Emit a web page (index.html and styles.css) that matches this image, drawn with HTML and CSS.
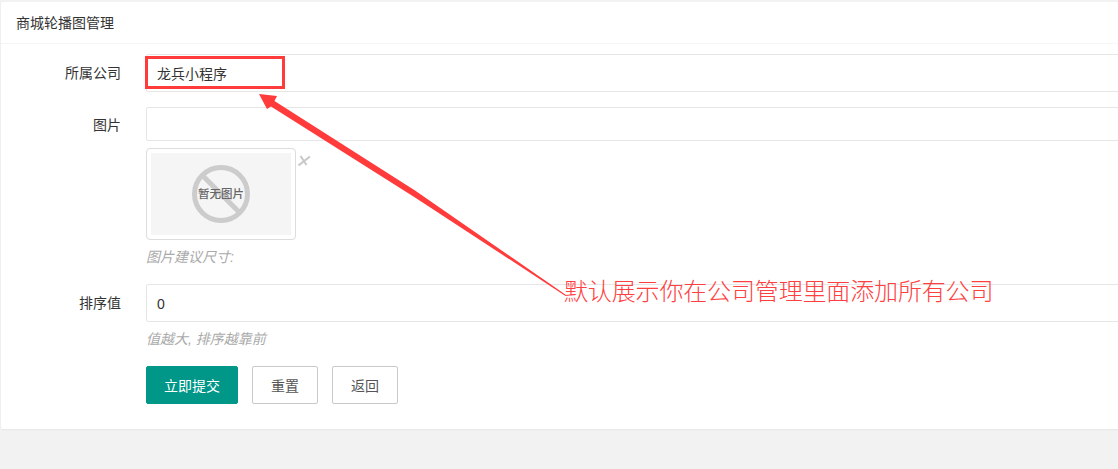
FILE: index.html
```html
<!DOCTYPE html>
<html lang="zh">
<head>
  <meta charset="UTF-8" />
  <title>商城轮播图管理</title>
  <link rel="stylesheet" href="styles.css">
</head>
<body>
  <div class="card">
    <div class="card-header">商城轮播图管理</div>
    <form class="form">
      <div class="row row-company">
        <label class="row-label">所属公司</label>
        <div class="row-field">
          <div class="input input-tall">龙兵小程序</div>
          <div class="mark-box"></div>
        </div>
      </div>
      <div class="row row-image">
        <label class="row-label">图片</label>
        <div class="row-field">
          <div class="input input-short"></div>
          <div class="thumb-line">
            <div class="thumb">
              <div class="thumb-inner">
                <svg class="no-image" width="60" height="60" viewBox="0 0 60 60">
                  <circle cx="30" cy="30" r="26.5" fill="none" stroke="#ccc" stroke-width="5"/>
                  <line x1="11" y1="11" x2="49" y2="49" stroke="#ccc" stroke-width="5"/>
                </svg>
                <span class="no-image-text">暂无图片</span>
              </div>
            </div>
            <svg class="thumb-close" width="14" height="12" viewBox="0 0 14 12">
              <path d="M0.5 10.5 L12 1.5 M2.5 1 L8.5 10" fill="none" stroke="#c8c8c8" stroke-width="2"/>
            </svg>
          </div>
          <p class="hint hint-image">图片建议尺寸:</p>
        </div>
      </div>
      <div class="row row-sort">
        <label class="row-label">排序值</label>
        <div class="row-field">
          <div class="input input-tall">0</div>
          <p class="hint hint-sort">值越大, 排序越靠前</p>
        </div>
      </div>
      <div class="row row-actions">
        <div class="row-label"></div>
        <div class="actions">
          <button type="button" class="btn btn-primary">立即提交</button>
          <button type="button" class="btn">重置</button>
          <button type="button" class="btn">返回</button>
        </div>
      </div>
    </form>
  </div>

  <svg class="arrow" width="1118" height="469" viewBox="0 0 1118 469">
    <polygon points="259,94 277,96 274.5,101 415,190.5 566,295 565.5,296 415,197.5 271,106.5 267,109" fill="#ff3b3b"/>
  </svg>
  <div class="note">默认展示你在公司管理里面添加所有公司</div>
</body>
</html>
```

FILE: styles.css
```css
* { box-sizing: border-box; margin: 0; padding: 0; }
html, body { height: 100%; }
body {
  position: relative;
  background: #f2f2f2;
  font-family: "Liberation Sans", "Noto Sans CJK SC", sans-serif;
  font-size: 14px;
  color: #333;
  overflow: hidden;
  padding: 2px 0 0 1px;
}
.card {
  width: calc(100% + 20px);
  height: 427px;
  background: #fff;
  border-radius: 2px;
  box-shadow: 0 1px 2px rgba(0,0,0,0.05);
}
.card-header {
  height: 42px;
  line-height: 42px;
  padding-left: 15px;
  border-bottom: 1px solid #f6f6f6;
}
.form { padding-top: 10px; }
.row { display: flex; }
.row-label {
  width: 120px;
  flex: none;
  text-align: right;
  line-height: 38px;
}
.row-field {
  position: relative;
  flex: 1;
  margin-left: 25px;
}
.input {
  border: 1px solid #e6e6e6;
  border-radius: 2px;
  padding-left: 10px;
  background: #fff;
}
.input-tall { height: 38px; line-height: 38px; }
.input-short { height: 34px; }
.row-image { margin-top: 15px; }
.row-image .row-label { line-height: 36px; }
.thumb-line { display: flex; margin-top: 7px; }
.thumb {
  width: 150px;
  height: 92px;
  padding: 4px;
  border: 1px solid #ddd;
  border-radius: 4px;
}
.thumb-inner {
  position: relative;
  display: flex;
  align-items: center;
  justify-content: center;
  height: 100%;
  background: #f5f5f5;
}
.no-image-text {
  position: absolute;
  font-size: 11.5px;
  line-height: 16px;
  font-weight: 500;
  color: #666;
}
.thumb-close { margin: 7px 0 0 2px; }
.hint {
  font-style: italic;
  color: #aaa;
  line-height: 20px;
}
.hint-image { margin-top: 7px; }
.row-sort { margin-top: 17px; }
.hint-sort { margin-top: 7px; }
.row-actions { margin-top: 17px; }
.actions { display: flex; gap: 14px; margin-left: 25px; }
.btn {
  width: 66px;
  height: 38px;
  background: #fff;
  border: 1px solid #c9c9c9;
  border-radius: 2px;
  font: inherit;
  color: #555;
}
.btn-primary {
  width: 92px;
  background: #009688;
  border-color: #009688;
  color: #fff;
}
.mark-box {
  position: absolute;
  left: -1px;
  top: 2px;
  width: 140px;
  height: 33px;
  border: 3px solid #ff3b3b;
}
.arrow {
  position: absolute;
  left: 0;
  top: 0;
  pointer-events: none;
}
.note {
  position: absolute;
  left: 564px;
  top: 274px;
  font-size: 24px;
  letter-spacing: -0.15px;
  line-height: 36px;
  font-weight: 300;
  color: #ff4040;
  white-space: nowrap;
}
```
